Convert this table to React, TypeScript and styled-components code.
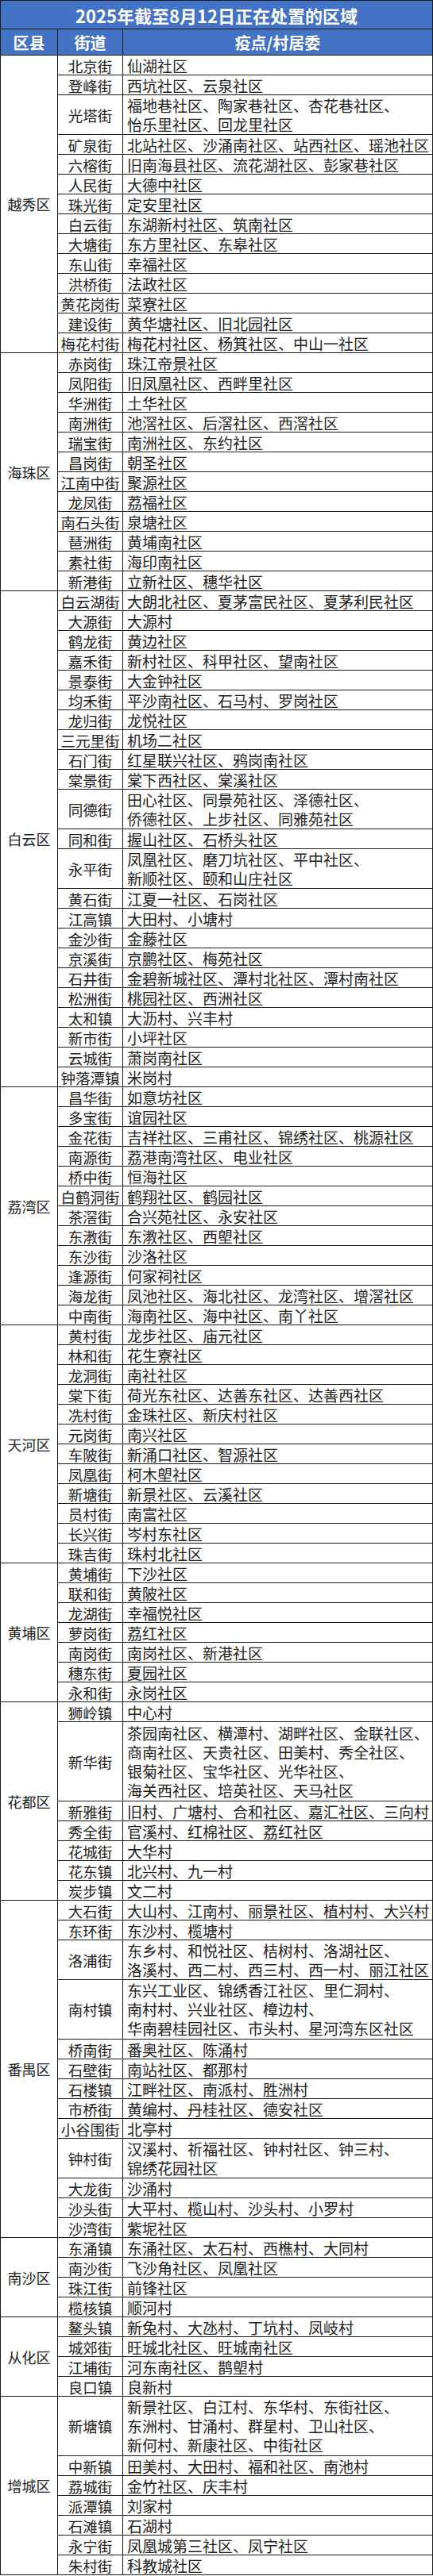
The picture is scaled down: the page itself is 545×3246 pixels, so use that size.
import React from 'react';
import styled, {createGlobalStyle} from 'styled-components';

const GlobalStyle = createGlobalStyle`
    body {
        margin: 0;
        background: #fff;
        font-family: "Noto Sans CJK SC", "Noto Sans", sans-serif;
    }
`;

const LINE = 25;
const COL1 = 71;
const COL2 = 82;

const Sheet = styled.div`
    width: 545px;
    box-sizing: border-box;
    border-left: 1px solid #1a1a1a;
    border-right: 1px solid #1a1a1a;
    color: #222;
`;

const TitleBar = styled.div`
    height: 37px;
    box-sizing: border-box;
    border-top: 1px solid #1a1a1a;
    border-bottom: 1px solid #1a1a1a;
    background: #4472c4;
    color: #fff;
    font-size: 22px;
    font-weight: 700;
    display: flex;
    align-items: center;
    justify-content: center;
`;

const HeaderRow = styled.div`
    display: grid;
    grid-template-columns: ${COL1}px ${COL2}px 1fr;
    height: 33px;
    box-sizing: border-box;
    border-bottom: 1px solid #1a1a1a;
    background: #4472c4;
    color: #fff;
    font-size: 20px;
    font-weight: 700;
`;

const HeadCell = styled.div<{$first?: boolean}>`
    display: flex;
    align-items: center;
    justify-content: center;
    border-left: ${({$first}) => ($first ? 'none' : '1px solid #1a1a1a')};
`;

const DistrictBlock = styled.div`
    display: grid;
    grid-template-columns: ${COL1}px 1fr;
`;

const DistrictName = styled.div`
    display: flex;
    align-items: center;
    justify-content: center;
    font-size: 18px;
    border-bottom: 1px solid #1a1a1a;
`;

const StreetList = styled.div`
    display: flex;
    flex-direction: column;
    border-left: 1px solid #1a1a1a;
`;

const StreetRow = styled.div<{$lines: number}>`
    display: grid;
    grid-template-columns: ${COL2 - 1}px 1fr;
    height: ${({$lines}) => $lines * LINE}px;
    box-sizing: border-box;
    border-bottom: 1px solid #1a1a1a;
    font-size: 19px;
`;

const StreetName = styled.div`
    display: flex;
    align-items: center;
    justify-content: center;
    white-space: nowrap;
    font-size: 18.5px;
`;

const Places = styled.div`
    display: flex;
    flex-direction: column;
    justify-content: center;
    padding-left: 5px;
    border-left: 1px solid #1a1a1a;
    line-height: 24px;
    white-space: nowrap;
`;

interface IStreet {
    name: string;
    lines: string[];
}

interface IDistrict {
    name: string;
    streets: IStreet[];
}

const s = (name: string, ...lines: string[]): IStreet => ({name, lines});

const districts: IDistrict[] = [
    {
        name: '越秀区',
        streets: [
            s('北京街', '仙湖社区'),
            s('登峰街', '西坑社区、云泉社区'),
            s('光塔街', '福地巷社区、陶家巷社区、杏花巷社区、', '怡乐里社区、回龙里社区'),
            s('矿泉街', '北站社区、沙涌南社区、站西社区、瑶池社区'),
            s('六榕街', '旧南海县社区、流花湖社区、彭家巷社区'),
            s('人民街', '大德中社区'),
            s('珠光街', '定安里社区'),
            s('白云街', '东湖新村社区、筑南社区'),
            s('大塘街', '东方里社区、东皋社区'),
            s('东山街', '幸福社区'),
            s('洪桥街', '法政社区'),
            s('黄花岗街', '菜寮社区'),
            s('建设街', '黄华塘社区、旧北园社区'),
            s('梅花村街', '梅花村社区、杨箕社区、中山一社区'),
        ],
    },
    {
        name: '海珠区',
        streets: [
            s('赤岗街', '珠江帝景社区'),
            s('凤阳街', '旧凤凰社区、西畔里社区'),
            s('华洲街', '土华社区'),
            s('南洲街', '池滘社区、后滘社区、西滘社区'),
            s('瑞宝街', '南洲社区、东约社区'),
            s('昌岗街', '朝圣社区'),
            s('江南中街', '聚源社区'),
            s('龙凤街', '荔福社区'),
            s('南石头街', '泉塘社区'),
            s('琶洲街', '黄埔南社区'),
            s('素社街', '海印南社区'),
            s('新港街', '立新社区、穗华社区'),
        ],
    },
    {
        name: '白云区',
        streets: [
            s('白云湖街', '大朗北社区、夏茅富民社区、夏茅利民社区'),
            s('大源街', '大源村'),
            s('鹤龙街', '黄边社区'),
            s('嘉禾街', '新村社区、科甲社区、望南社区'),
            s('景泰街', '大金钟社区'),
            s('均禾街', '平沙南社区、石马村、罗岗社区'),
            s('龙归街', '龙悦社区'),
            s('三元里街', '机场二社区'),
            s('石门街', '红星联兴社区、鸦岗南社区'),
            s('棠景街', '棠下西社区、棠溪社区'),
            s('同德街', '田心社区、同景苑社区、泽德社区、', '侨德社区、上步社区、同雅苑社区'),
            s('同和街', '握山社区、石桥头社区'),
            s('永平街', '凤凰社区、磨刀坑社区、平中社区、', '新顺社区、颐和山庄社区'),
            s('黄石街', '江夏一社区、石岗社区'),
            s('江高镇', '大田村、小塘村'),
            s('金沙街', '金藤社区'),
            s('京溪街', '京鹏社区、梅苑社区'),
            s('石井街', '金碧新城社区、潭村北社区、潭村南社区'),
            s('松洲街', '桃园社区、西洲社区'),
            s('太和镇', '大沥村、兴丰村'),
            s('新市街', '小坪社区'),
            s('云城街', '萧岗南社区'),
            s('钟落潭镇', '米岗村'),
        ],
    },
    {
        name: '荔湾区',
        streets: [
            s('昌华街', '如意坊社区'),
            s('多宝街', '谊园社区'),
            s('金花街', '吉祥社区、三甫社区、锦绣社区、桃源社区'),
            s('南源街', '荔港南湾社区、电业社区'),
            s('桥中街', '恒海社区'),
            s('白鹤洞街', '鹤翔社区、鹤园社区'),
            s('茶滘街', '合兴苑社区、永安社区'),
            s('东漖街', '东漖社区、西塱社区'),
            s('东沙街', '沙洛社区'),
            s('逢源街', '何家祠社区'),
            s('海龙街', '凤池社区、海北社区、龙湾社区、增滘社区'),
            s('中南街', '海南社区、海中社区、南丫社区'),
        ],
    },
    {
        name: '天河区',
        streets: [
            s('黄村街', '龙步社区、庙元社区'),
            s('林和街', '花生寮社区'),
            s('龙洞街', '南社社区'),
            s('棠下街', '荷光东社区、达善东社区、达善西社区'),
            s('冼村街', '金珠社区、新庆村社区'),
            s('元岗街', '南兴社区'),
            s('车陂街', '新涌口社区、智源社区'),
            s('凤凰街', '柯木塱社区'),
            s('新塘街', '新景社区、云溪社区'),
            s('员村街', '南富社区'),
            s('长兴街', '岑村东社区'),
            s('珠吉街', '珠村北社区'),
        ],
    },
    {
        name: '黄埔区',
        streets: [
            s('黄埔街', '下沙社区'),
            s('联和街', '黄陂社区'),
            s('龙湖街', '幸福悦社区'),
            s('萝岗街', '荔红社区'),
            s('南岗街', '南岗社区、新港社区'),
            s('穗东街', '夏园社区'),
            s('永和街', '永岗社区'),
        ],
    },
    {
        name: '花都区',
        streets: [
            s('狮岭镇', '中心村'),
            s(
                '新华街',
                '茶园南社区、横潭村、湖畔社区、金联社区、',
                '商南社区、天贵社区、田美村、秀全社区、',
                '银菊社区、宝华社区、光华社区、',
                '海关西社区、培英社区、天马社区',
            ),
            s('新雅街', '旧村、广塘村、合和社区、嘉汇社区、三向村'),
            s('秀全街', '官溪村、红棉社区、荔红社区'),
            s('花城街', '大华村'),
            s('花东镇', '北兴村、九一村'),
            s('炭步镇', '文二村'),
        ],
    },
    {
        name: '番禺区',
        streets: [
            s('大石街', '大山村、江南村、丽景社区、植村村、大兴村'),
            s('东环街', '东沙村、榄塘村'),
            s('洛浦街', '东乡村、和悦社区、桔树村、洛湖社区、', '洛溪村、西二村、西三村、西一村、丽江社区'),
            s(
                '南村镇',
                '东兴工业区、锦绣香江社区、里仁洞村、',
                '南村村、兴业社区、樟边村、',
                '华南碧桂园社区、市头村、星河湾东区社区',
            ),
            s('桥南街', '番奥社区、陈涌村'),
            s('石壁街', '南站社区、都那村'),
            s('石楼镇', '江畔社区、南派村、胜洲村'),
            s('市桥街', '黄编村、丹桂社区、德安社区'),
            s('小谷围街', '北亭村'),
            s('钟村街', '汉溪村、祈福社区、钟村社区、钟三村、', '锦绣花园社区'),
            s('大龙街', '沙涌村'),
            s('沙头街', '大平村、榄山村、沙头村、小罗村'),
            s('沙湾街', '紫坭社区'),
        ],
    },
    {
        name: '南沙区',
        streets: [
            s('东涌镇', '东涌社区、太石村、西樵村、大同村'),
            s('南沙街', '飞沙角社区、凤凰社区'),
            s('珠江街', '前锋社区'),
            s('榄核镇', '顺河村'),
        ],
    },
    {
        name: '从化区',
        streets: [
            s('鳌头镇', '新兔村、大氹村、丁坑村、凤岐村'),
            s('城郊街', '旺城北社区、旺城南社区'),
            s('江埔街', '河东南社区、鹊塱村'),
            s('良口镇', '良新村'),
        ],
    },
    {
        name: '增城区',
        streets: [
            s('新塘镇', '新景社区、白江村、东华村、东街社区、', '东洲村、甘涌村、群星村、卫山社区、', '新何村、新康社区、中街社区'),
            s('中新镇', '田美村、大田村、福和社区、南池村'),
            s('荔城街', '金竹社区、庆丰村'),
            s('派潭镇', '刘家村'),
            s('石滩镇', '石湖村'),
            s('永宁街', '凤凰城第三社区、凤宁社区'),
            s('朱村街', '科教城社区'),
        ],
    },
];

function District({district}: {district: IDistrict}) {
    return (
        <DistrictBlock>
            <DistrictName>{district.name}</DistrictName>
            <StreetList>
                {district.streets.map((street) => (
                    <StreetRow key={street.name} $lines={street.lines.length}>
                        <StreetName>{street.name}</StreetName>
                        <Places>
                            {street.lines.map((line, i) => (
                                <div key={i}>{line}</div>
                            ))}
                        </Places>
                    </StreetRow>
                ))}
            </StreetList>
        </DistrictBlock>
    );
}

export default function App() {
    return (
        <>
            <GlobalStyle />
            <Sheet>
                <TitleBar>2025年截至8月12日正在处置的区域</TitleBar>
                <HeaderRow>
                    <HeadCell $first>区县</HeadCell>
                    <HeadCell>街道</HeadCell>
                    <HeadCell>疫点/村居委</HeadCell>
                </HeaderRow>
                {districts.map((d) => (
                    <District key={d.name} district={d} />
                ))}
            </Sheet>
        </>
    );
}
